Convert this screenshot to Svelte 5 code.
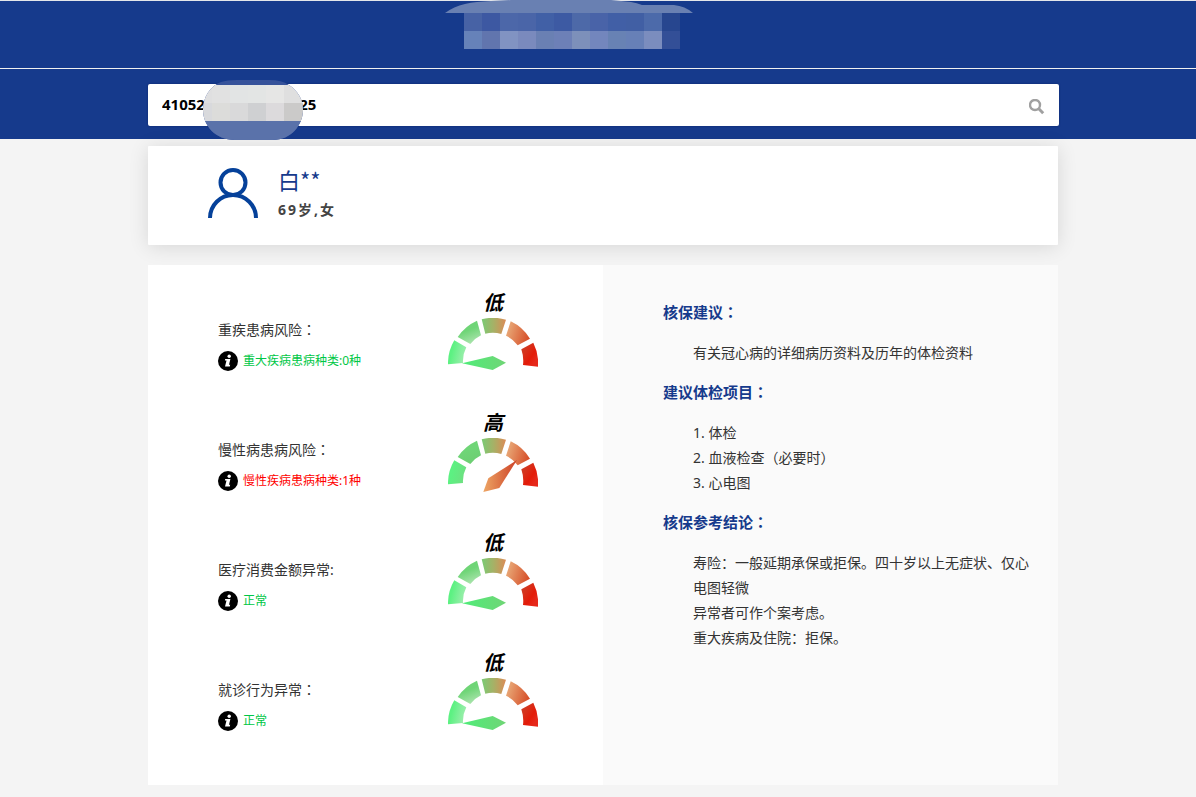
<script>
  let idNumber = "41052" + "\u2007".repeat(11) + "25";

  const person = { name: "白**", info: "69岁,女" };

  const risks = [
    { label: "重疾患病风险", colon: "：", note: "重大疾病患病种类:0种", level: "低" },
    { label: "慢性病患病风险", colon: "：", note: "慢性疾病患病种类:1种", level: "高" },
    { label: "医疗消费金额异常:", colon: "", note: "正常", level: "低" },
    { label: "就诊行为异常", colon: "：", note: "正常", level: "低" }
  ];

  const sections = [
    { title: "核保建议", lines: ["有关冠心病的详细病历资料及历年的体检资料"] },
    { title: "建议体检项目", lines: ["1. 体检", "2. 血液检查（必要时）", "3. 心电图"] },
    {
      title: "核保参考结论",
      lines: [
        "寿险：一般延期承保或拒保。四十岁以上无症状、仅心电图轻微",
        "异常者可作个案考虑。",
        "重大疾病及住院：拒保。"
      ]
    }
  ];

  // masked title and id, 18px tiles
  const titleTiles = [
    ["#4762a5", "#3d58a2", "#4c67a9", "#4a65a8", "#4160a6", "#3d5aa3", "#4d69a8", "#4963a8", "#415fa6", "#415fa4", "#4c6aaa", "#27468f"],
    ["#6682b9", "#6175ae", "#8193c2", "#7a8abd", "#6a80b3", "#6d80b7", "#7d90ba", "#7386bd", "#6882b4", "#6780b7", "#7b8dbe", "#334f97"]
  ];
  const idTiles = [
    ["#dfdfe0", "#e1e1e1", "#e2e4e4", "#e3e5e4", "#e6e6e5", "#dfdfdf", "#dedede"],
    ["#d8d9dc", "#dcdcda", "#d9d9da", "#cfd0d2", "#dcdadc", "#cbcac9", "#cfcfcf"]
  ];
</script>

<header>
  <div class="title-bar">
    <svg class="title-mask" width="248" height="49" viewBox="0 0 248 49" aria-hidden="true">
      <path d="M0 13C12 4 26 2 46 1L66 0H166L186 2Q192 3 197 5H229Q240 6 248 13Z" fill="#6980b2" />
      {#each titleTiles as row, y}
        {#each row as color, x}
          <rect x={19 + x * 18} y={13 + y * 18} width="18" height="18" fill={color} shape-rendering="crispEdges" />
        {/each}
      {/each}
    </svg>
  </div>
  <div class="search-bar">
    <form class="search" on:submit|preventDefault>
      <input type="text" aria-label="身份证号" bind:value={idNumber} />
      <button aria-label="搜索">
        <svg width="16" height="16" viewBox="0 0 16 16">
          <circle cx="6" cy="6" r="5" fill="none" stroke="#a0a0a0" stroke-width="2.4" />
          <path d="M9.8 9.8L14.2 14.2" stroke="#a0a0a0" stroke-width="3" />
        </svg>
      </button>
      <svg class="id-mask" width="100" height="61" viewBox="0 0 100 61" aria-hidden="true">
        <clipPath id="blob">
          <path d="M0 31C0 18 7 7 18 3Q24 1 34 1H66Q79 1 86 6C95 12 100 20 100 31C100 46 88 61 70 61H32C12 61 0 46 0 31Z" />
        </clipPath>
        <g clip-path="url(#blob)">
          <rect width="100" height="61" fill="#36529a" />
          {#each idTiles as row, y}
            {#each row as color, x}
              <rect x={-9 + x * 18} y={6 + y * 18} width="18" height="18" fill={color} shape-rendering="crispEdges" />
            {/each}
          {/each}
          <rect y="42" width="100" height="19" fill="#5a72aa" />
        </g>
      </svg>
    </form>
  </div>
</header>

<main>
  <section class="person">
    <svg width="50" height="50" viewBox="0 0 50 50" fill="none" stroke="#05419a" stroke-width="4">
      <circle cx="25" cy="14.5" r="12.5" />
      <path d="M2 50A23 23 0 0 1 48 50" />
    </svg>
    <div>
      <h1>{person.name}</h1>
      <p>{person.info}</p>
    </div>
  </section>

  <div class="report">
    <section class="risks">
      {#each risks as risk, i}
        <div class="risk">
          <div class="text">
            <h2>{risk.label}<span class="colon">{risk.colon}</span></h2>
            <p class:high={risk.level === "高"}>
              <svg width="20" height="20" viewBox="0 0 20 20">
                <circle cx="10" cy="10" r="10" fill="#000" />
                <circle cx="11.2" cy="5.2" r="1.7" fill="#fff" />
                <path d="M7.2 8H12.4L11 13.8H12.2L11.8 15.4H7L8.5 9.6H6.9Z" fill="#fff" />
              </svg>
              {risk.note}
            </p>
          </div>
          <div class="gauge">
            <strong>{risk.level}</strong>
            <svg width="90" height="56" viewBox="0 0 90 56" aria-hidden="true">
              <defs>
                <linearGradient id="a{i}" x1="0" y1="0.4" x2="1" y2="0.7">
                  <stop offset="0.2" stop-color="#5cf182" /><stop offset="1" stop-color={risk.level === "高" ? "#70dd80" : "#a5edb2"} />
                </linearGradient>
                <linearGradient id="b{i}" x1="0.3" y1="0" x2="0.7" y2="1">
                  <stop offset="0.4" stop-color="#6fd577" /><stop offset="1" stop-color={risk.level === "高" ? "#6dcd72" : "#b0e5b2"} />
                </linearGradient>
                <linearGradient id="c{i}">
                  <stop offset="0" stop-color="#7acb74" /><stop offset="0.5" stop-color="#a7b066" /><stop offset="1" stop-color="#dc8b55" />
                </linearGradient>
                <linearGradient id="d{i}" x1="0" y1="0.3" x2="1" y2="0.6">
                  <stop offset="0" stop-color="#e9ad7b" /><stop offset="1" stop-color="#d64d27" />
                </linearGradient>
                <linearGradient id="e{i}" x1="0.1" y1="0.1" x2="0.8" y2="0.8">
                  <stop offset="0" stop-color="#cc4128" /><stop offset="0.7" stop-color="#e31b08" /><stop offset="1" stop-color="#e6281a" />
                </linearGradient>
                <linearGradient id="n{i}">
                  {#if risk.level === "高"}
                    <stop offset="0" stop-color="#eda665" /><stop offset="1" stop-color="#cd4127" />
                  {:else}
                    <stop offset="0" stop-color="#4eed79" /><stop offset="1" stop-color="#70d576" />
                  {/if}
                </linearGradient>
              </defs>
              <path d="M0 46.3A45 45 0 0 1 6.3 22.3L18.3 29.3A30 30 0 0 0 15 45Z" fill="url(#a{i})" />
              <path d="M9.7 19A45 45 0 0 1 29 2.7L33 17.3A30 30 0 0 0 22.3 26Z" fill="url(#b{i})" />
              <path d="M33.7 1.3A45 45 0 0 1 58 1.7L53.3 16A30 30 0 0 0 37.3 15.7Z" fill="url(#c{i})" />
              <path d="M62.7 3.3A45 45 0 0 1 82 20.7L69.7 27.3A30 30 0 0 0 58 17.7Z" fill="url(#d{i})" />
              <path d="M85.3 24.7Q91 36 90 48.7L75 47Q76 39 73.3 31.3Z" fill="url(#e{i})" />
              {#if risk.level === "高"}
                <path d="M69 22L51.3 50L35.3 54L40.3 40.3Z" fill="url(#n{i})" />
              {:else}
                <path d="M14 45.3L44.7 38L58 44.7L44.7 52Z" fill="url(#n{i})" />
              {/if}
            </svg>
          </div>
        </div>
      {/each}
    </section>

    <section class="advice">
      {#each sections as section}
        <h2>{section.title}<span class="colon">：</span></h2>
        <div class="lines">
          {#each section.lines as line}
            <p>{line}</p>
          {/each}
        </div>
      {/each}
    </section>
  </div>
</main>

<style>
  :global(body) {
    background: #f4f4f4;
    color: #333;
    font-family: "Noto Sans", "Noto Sans CJK SC", sans-serif;
    font-size: 14px;
  }

  h1, h2, p {
    margin: 0;
    font-weight: normal;
  }

  header {
    background: #163a8c;
    border-top: 1px solid #e4e6ea;
  }

  .title-bar {
    position: relative;
    height: 67px;
    border-bottom: 1px solid #f0f0f0;
  }

  .title-mask {
    position: absolute;
    top: -1px;
    left: calc(50% - 153px);
  }

  .search-bar {
    padding: 15px 137px 13px 148px;
  }

  .search {
    position: relative;
    display: flex;
    height: 42px;
    background: #fff;
    border-radius: 2px;
    box-shadow: 0 0 2px #0a2466;
  }

  input {
    flex: 1;
    min-width: 0;
    padding: 0 14px 2px;
    border: 0;
    outline: 0;
    background: none;
    color: #000;
    font-family: inherit;
    font-size: 15px;
    font-weight: bold;
  }

  button {
    display: flex;
    align-items: center;
    padding: 4px 14px 0;
    border: 0;
    background: none;
    cursor: pointer;
  }

  .id-mask {
    position: absolute;
    top: -5px;
    left: 55px;
  }

  main {
    padding: 7px 138px 12px 148px;
  }

  .person {
    display: flex;
    gap: 20px;
    padding: 22px 60px 15px;
    background: #fff;
    border-radius: 1px;
    box-shadow: 0 2px 20px rgba(0, 0, 0, 0.12);
  }

  .person h1 {
    color: #163a8c;
    font-family: "Noto Sans CJK SC", sans-serif;
    font-size: 22px;
    line-height: 22px;
  }

  .person p {
    font-weight: bold;
    letter-spacing: 2px;
    line-height: 40px;
    color: #444;
  }

  .report {
    display: grid;
    grid-template-columns: 1fr 1fr;
    margin-top: 20px;
    background: #fff;
  }

  .risks {
    padding: 20px 65px 20px 70px;
  }

  .risk {
    display: flex;
    justify-content: space-between;
    height: 120px;
  }

  .text {
    padding-top: 35px;
  }

  .text h2 {
    font-size: 14px;
    line-height: 20px;
  }

  .text p {
    display: flex;
    align-items: center;
    gap: 5px;
    margin-top: 11px;
    color: #00c746;
    font-size: 12px;
    line-height: 20px;
  }

  .text p.high {
    color: #f00;
  }

  .colon {
    font-family: "Noto Sans CJK TC", sans-serif;
    line-height: 1;
  }

  .gauge {
    display: flex;
    flex-direction: column;
    align-items: center;
    padding-top: 3px;
  }

  .gauge strong {
    color: #000;
    font-size: 20px;
    font-style: italic;
    line-height: 30px;
  }

  .advice {
    padding: 35px 20px 35px 60px;
    background: #fafafa;
  }

  .advice h2 {
    color: #163a8c;
    font-size: 15px;
    font-weight: bold;
    line-height: 25px;
  }

  .lines {
    padding: 15px 0 15px 30px;
    line-height: 25px;
  }
</style>
